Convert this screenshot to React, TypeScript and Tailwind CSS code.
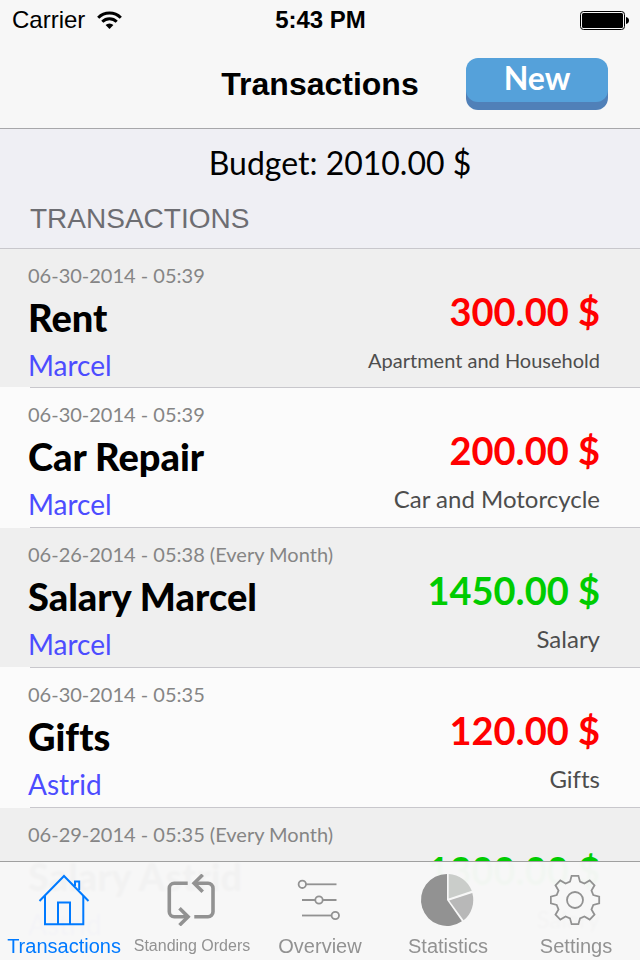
import { ReactNode } from "react"

type Transaction = {
    date: string
    title: string
    person: string
    amount: string
    category: string
    income?: boolean
    longCategory?: boolean
}

const transactions: Transaction[] = [
    { date: "06-30-2014 - 05:39", title: "Rent", person: "Marcel", amount: "300.00 $", category: "Apartment and Household", longCategory: true },
    { date: "06-30-2014 - 05:39", title: "Car Repair", person: "Marcel", amount: "200.00 $", category: "Car and Motorcycle" },
    { date: "06-26-2014 - 05:38 (Every Month)", title: "Salary Marcel", person: "Marcel", amount: "1450.00 $", category: "Salary", income: true },
    { date: "06-30-2014 - 05:35", title: "Gifts", person: "Astrid", amount: "120.00 $", category: "Gifts" },
    { date: "06-29-2014 - 05:35 (Every Month)", title: "Salary Astrid", person: "Astrid", amount: "1300.00 $", category: "Salary", income: true },
]

const WifiIcon = () => (
    <svg width="25" height="18" viewBox="0 0 25 18" fill="none" stroke="#000" strokeWidth="3" aria-hidden="true">
        <path d="M1.2 6.7a16 16 0 0 1 22.6 0" />
        <path d="M5.3 10.8a10.2 10.2 0 0 1 14.4 0" />
        <path d="M12.5 18l-3.9-3.9a5.5 5.5 0 0 1 7.8 0z" fill="#000" stroke="none" />
    </svg>
)

const BatteryIcon = () => (
    <svg width="49" height="19" viewBox="0 0 49 19" aria-label="Battery full">
        <rect x="0.5" y="0.5" width="44" height="18" rx="3" fill="none" stroke="#000" />
        <rect x="2" y="2" width="41" height="15" rx="1.5" fill="#000" />
        <path d="M46 6c2 .4 3 1.8 3 3.500s-1 3.100-3 3.500z" fill="#000" />
    </svg>
)

const HouseIcon = () => (
    <svg width="52" height="52" viewBox="0 0 52 52" fill="none" stroke="currentColor" strokeWidth="2" aria-hidden="true">
        <path d="M1.500 27L26 2l24.500 25" />
        <path d="M7 22v28.300h38.300V22" />
        <path d="M20 50V28.500h12V50" />
        <path d="M37 12V7.500h4.200V16" />
    </svg>
)

const RepeatIcon = () => (
    <svg width="52" height="52" viewBox="0 0 52 52" fill="none" stroke="currentColor" strokeWidth="3.6" aria-hidden="true">
        <path d="M21.700 9.300H8.300a5 5 0 0 0-5 5v23.400a5 5 0 0 0 5 5H22" />
        <path d="M28.300 42.700H42a5 5 0 0 0 5-5V14.300a5 5 0 0 0-5-5H29" />
        <path d="M13.500 34.200l8.600 8.500-8.600 8.500" />
        <path d="M36.700.8l-8.600 8.500 8.600 8.500" />
    </svg>
)

const SlidersIcon = () => (
    <svg width="52" height="52" viewBox="0 0 52 52" fill="none" stroke="currentColor" strokeWidth="1.800" aria-hidden="true">
        <circle cx="8.300" cy="10.300" r="3.700" />
        <path d="M12 10.300h30.500" />
        <path d="M8 26h13.300M28.700 26h13.800" />
        <circle cx="25" cy="26" r="3.700" />
        <path d="M8 41.500h29.600" />
        <circle cx="41.300" cy="41.500" r="3.700" />
    </svg>
)

const PieIcon = () => (
    <svg className="overflow-visible" width="52" height="52" viewBox="0 0 52 52" aria-hidden="true">
        <path d="M25 26V0a26 26 0 1 0 14.900 47.300z" fill="#929292" />
        <path d="M26.700 24.400V0A26 26 0 0 1 49.800 16.800z" fill="#cacdca" />
        <path d="M27.200 26.400L50.300 19A26 26 0 0 1 41.600 46.300z" fill="#b8b8b8" />
    </svg>
)

// four corners for each of the eight teeth
const gearPoints = Array.from({ length: 8 }, (_, i) => {
    const a = (i * Math.PI) / 4
    return [[-5, -18.3], [-3.4, -24.2], [3.4, -24.2], [5, -18.3]]
        .map(([x, y]) => `${25 + x * Math.cos(a) - y * Math.sin(a)},${26 + x * Math.sin(a) + y * Math.cos(a)}`)
        .join(" ")
}).join(" ")

const GearIcon = () => (
    <svg width="52" height="52" viewBox="0 0 52 52" fill="none" stroke="currentColor" strokeWidth="1.800" aria-hidden="true">
        <polygon points={gearPoints} />
        <circle cx="25" cy="26" r="8" />
    </svg>
)

const TransactionRow = ({ item, shaded }: { item: Transaction; shaded: boolean }) => (
    <li className="flex h-[140px] flex-col bg-[#fbfbfb] first:h-[139px]">
        <div className={`flex flex-1 justify-between gap-4 pr-10 pl-7 ${shaded ? "bg-[#efefef]" : "bg-[#fbfbfb]"}`}>
            <div className="pt-3 whitespace-nowrap">
                <div className="text-[20px] leading-[28px] text-[#858585]">{item.date}</div>
                <h2 className="text-[38px] leading-[56px] font-black text-black">{item.title}</h2>
                <div className="text-[28px] leading-[40px] text-[#4c4cff]">{item.person}</div>
            </div>
            <div className="pt-[34px] text-right whitespace-nowrap">
                <div className={`text-[38px] leading-[56px] font-bold ${item.income ? "text-[#00cc00]" : "text-[#ff0000]"}`}>
                    {item.amount}
                </div>
                <div className={`leading-[42px] text-[#4d4d4d] ${item.longCategory ? "text-[20px]" : "text-[24px]"}`}>
                    {item.category}
                </div>
            </div>
        </div>
        <div className="ml-[30px] h-px bg-[#c8c7cc]" />
    </li>
)

const Tab = ({ label, icon, active, small }: { label: string; icon: ReactNode; active?: boolean; small?: boolean }) => (
    <a
        href="#"
        aria-current={active ? "page" : undefined}
        className={`flex flex-1 flex-col items-center gap-2 pt-3 pb-0.5 ${active ? "text-[#007aff]" : "text-[#929292]"}`}
    >
        {icon}
        <span className={`leading-[24px] whitespace-nowrap ${small ? "text-[16px]" : "text-[20px]"}`}>{label}</span>
    </a>
)

const App = () => {
    return (
        <div className="grid h-screen grid-cols-1 grid-rows-[auto_minmax(0,1fr)_auto] bg-[#efeff4] font-['Liberation_Sans',Arial,sans-serif] text-black">
            <header className="border-b border-[#a7a7aa] bg-[#f7f7f7]">
                <div className="grid h-10 grid-cols-3 items-center pr-[11px] pl-3 text-[24px] leading-[40px]">
                    <div className="flex items-center gap-3">
                        <span>Carrier</span>
                        <WifiIcon />
                    </div>
                    <div className="text-center font-bold">5:43 PM</div>
                    <div className="flex justify-end">
                        <BatteryIcon />
                    </div>
                </div>
                <div className="grid h-[88px] grid-cols-[1fr_auto_1fr] items-center">
                    <h1 className="col-start-2 text-[32px] font-bold">Transactions</h1>
                    <button
                        type="button"
                        className="mr-8 mb-2 h-11 w-[142px] justify-self-end rounded-xl bg-[#55a1da] pb-1 font-[Lato,sans-serif] text-[32px] leading-[40px] font-bold text-white shadow-[0_8px_0_#5080b8]"
                    >
                        New
                    </button>
                </div>
            </header>

            <main className="col-start-1 row-span-2 row-start-2 overflow-hidden">
                <section className="h-[120px] border-b border-[#c8c7cc] pt-3">
                    <p className="pl-10 text-center font-[Lato,sans-serif] text-[32px] leading-[44px]">Budget: 2010.00 $</p>
                    <h2 className="mt-4 pl-[30px] text-[28px] leading-[36px] text-[#6d6d72]">TRANSACTIONS</h2>
                </section>
                <ul className="font-[Lato,sans-serif] [font-variant-ligatures:none]">
                    {transactions.map((item, i) => (
                        <TransactionRow key={i} item={item} shaded={i % 2 === 0} />
                    ))}
                </ul>
            </main>

            <nav className="z-10 col-start-1 row-start-3 flex border-t border-[#a0a0a0] bg-[#f7f7f7]/98 backdrop-blur-[1px]">
                <Tab label="Transactions" icon={<HouseIcon />} active />
                <Tab label="Standing Orders" icon={<RepeatIcon />} small />
                <Tab label="Overview" icon={<SlidersIcon />} />
                <Tab label="Statistics" icon={<PieIcon />} />
                <Tab label="Settings" icon={<GearIcon />} />
            </nav>
        </div>
    )
}

export default App
